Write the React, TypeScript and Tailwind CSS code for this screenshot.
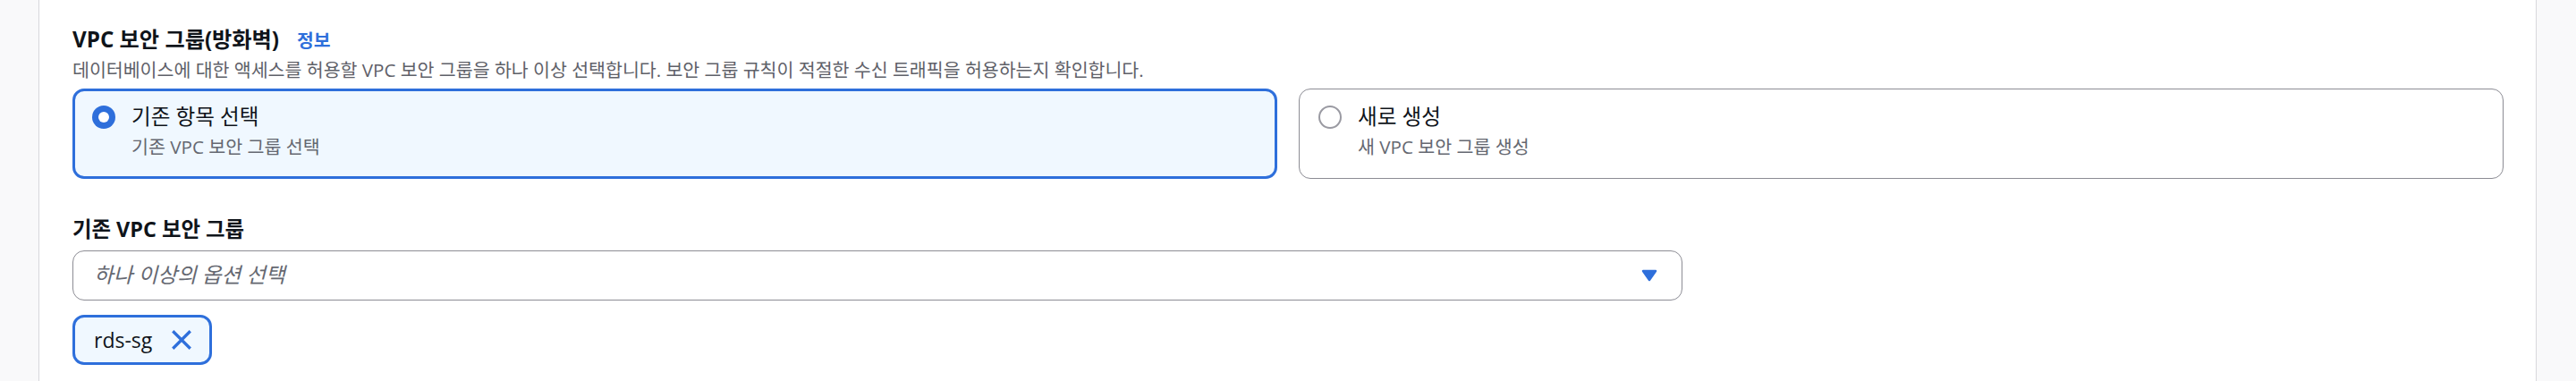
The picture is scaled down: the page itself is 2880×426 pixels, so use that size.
import React from "react"

const font = { fontFamily: '"Open Sans", "Noto Sans CJK KR", sans-serif' }

function Radio({ checked }: { checked: boolean }) {
  if (checked) {
    return (
      <span className="mt-[2px] flex h-[26px] w-[26px] shrink-0 items-center justify-center rounded-full bg-[#2e6fdb]">
        <span className="h-[12px] w-[12px] rounded-full bg-white" />
      </span>
    )
  }
  return <span className="mt-[2px] h-[26px] w-[26px] shrink-0 rounded-full border-2 border-[#9a9aa2] bg-white" />
}

function Tile({ title, desc, checked }: { title: string; desc: string; checked: boolean }) {
  return (
    <div
      className={
        checked
          ? "flex h-[101px] items-start gap-[18px] rounded-[13px] border-[3px] border-[#2e6fdb] bg-[#f0f8ff] pl-[19px] pt-[14px]"
          : "flex h-[101px] items-start gap-[18px] rounded-[13px] border border-[#8c8c94] bg-white pl-[21px] pt-[16px]"
      }
    >
      <Radio checked={checked} />
      <div className="flex flex-col">
        <span className="text-[23.6px] leading-[28px] text-[#0f141a]">{title}</span>
        <span className="mt-[7px] text-[20.6px] leading-[26px] text-[#656871]">{desc}</span>
      </div>
    </div>
  )
}

export default function App() {
  return (
    <div className="flex h-[426px] w-full bg-white" style={font}>
      <div className="w-[44px] shrink-0 border-r border-[#d8d8dc] bg-[#f9f9fa]" />
      <div className="flex-1 pl-[37px] pr-[36px] pt-[30px]">
        <div className="flex items-baseline">
          <span className="text-[24.2px] font-bold leading-[28px] text-[#0f141a]">VPC 보안 그룹(방화벽)</span>
          <a className="ml-[20px] text-[20.4px] font-bold leading-[28px] text-[#2e6fdb]">정보</a>
        </div>
        <p className="mt-[6px] text-[20.55px] leading-[26px] text-[#5f6169]">
          데이터베이스에 대한 액세스를 허용할 VPC 보안 그룹을 하나 이상 선택합니다. 보안 그룹 규칙이 적절한 수신 트래픽을 허용하는지 확인합니다.
        </p>
        <div className="mt-[8px] grid grid-cols-2 gap-[24px]">
          <Tile checked title="기존 항목 선택" desc="기존 VPC 보안 그룹 선택" />
          <Tile checked={false} title="새로 생성" desc="새 VPC 보안 그룹 생성" />
        </div>

        <div className="mt-[42px] text-[23.4px] font-bold leading-[28px] text-[#0f141a]">기존 VPC 보안 그룹</div>
        <div className="mt-[10px] flex h-[56px] w-[1800px] items-center justify-between rounded-[13px] border border-[#8c8c94] bg-white pl-[23px] pr-[27px]">
          <span className="text-[23.6px] italic text-[#656871]">하나 이상의 옵션 선택</span>
          <svg width="18" height="14" viewBox="0 0 18 14">
            <path d="M2 2h14L9 12z" fill="#2e6fdb" stroke="#2e6fdb" strokeWidth="2.5" strokeLinejoin="round" />
          </svg>
        </div>
        <div className="mt-[16px] flex h-[56px] w-[156px] items-center gap-[20px] rounded-[13px] border-[3px] border-[#2e6fdb] bg-[#f0f8ff] pl-[21px] pr-[14px]">
          <span className="text-[23px] text-[#0f141a]">rds-sg</span>
          <svg width="26" height="26" viewBox="0 0 16 16" fill="none">
            <path d="M2 2l12 12M14 2L2 14" stroke="#2e6fdb" strokeWidth="2" />
          </svg>
        </div>
      </div>
      <div className="w-[45px] shrink-0 border-l border-[#d8d8dc] bg-[#f9f9fa]" />
    </div>
  )
}
